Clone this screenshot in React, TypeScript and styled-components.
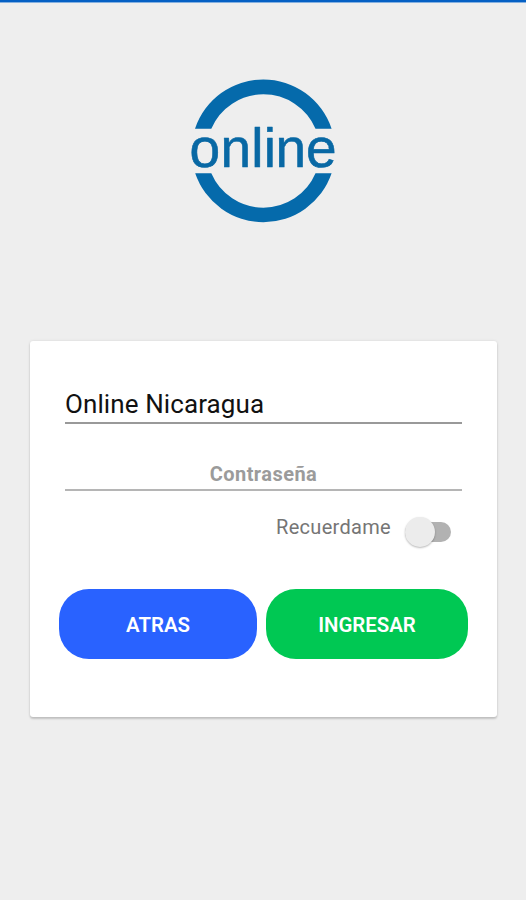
import React, { useState } from 'react';
import styled, { createGlobalStyle } from 'styled-components';

const GlobalStyle = createGlobalStyle`
  * { box-sizing: border-box; }
  body { margin: 0; background: #eeeeee; font-family: Roboto, sans-serif; }
`;

const Screen = styled.main`
  display: flex;
  flex-direction: column;
  height: 900px;
  width: 526px;
  background: #eeeeee;
  overflow: hidden;
`;

const StatusStrip = styled.div`
  height: 3px;
  flex: none;
  background: linear-gradient(#0560c4 0 2px, #84b0e0 2px 3px);
`;

const Logo = styled.svg`
  display: block;
  flex: none;
  width: 160px;
  height: 160px;
  margin: 67px 0 0 184px;
`;

const Wordmark = styled.text`
  font-family: 'Liberation Sans', sans-serif;
  font-size: 55px;
  fill: #0868a4;
  stroke: #0868a4;
  stroke-width: 0.6px;
  stroke-linejoin: round;
`;

const Card = styled.form`
  display: flex;
  flex-direction: column;
  flex: none;
  width: 467px;
  height: 376px;
  margin: 111px 0 0 30px;
  padding: 40px 29px 0;
  background: #ffffff;
  border-radius: 3px;
  box-shadow: 0 2px 2px rgba(0, 0, 0, 0.17), 0 0 3px rgba(0, 0, 0, 0.1);
`;

const Field = styled.input<{ $secret?: boolean }>`
  display: block;
  width: 397px;
  height: ${(p) => (p.$secret ? 42 : 43)}px;
  margin: ${(p) => (p.$secret ? 25 : 0)}px 0 0 6px;
  padding: ${(p) => (p.$secret ? '10px 0 0' : '4px 0 0')};
  border: 0;
  border-bottom: 2px solid ${(p) => (p.$secret ? '#b5b5b5' : '#999999')};
  border-radius: 0;
  outline: 0;
  background: transparent;
  color: #111111;
  font: ${(p) => (p.$secret ? '700 20px' : '400 26px')} Roboto, sans-serif;
  letter-spacing: ${(p) => (p.$secret ? 0.45 : 0.1)}px;
  text-align: ${(p) => (p.$secret ? 'center' : 'left')};
  &::placeholder { color: #9b9b9b; opacity: 1; }
`;

const RememberRow = styled.label`
  display: flex;
  align-items: center;
  justify-content: flex-end;
  gap: 14px;
  height: 32px;
  margin: 25px 17px 0 0;
`;

const RememberText = styled.span`
  color: #757575;
  font-size: 20px;
  line-height: 24px;
  letter-spacing: 0.3px;
  margin-top: -10px;
`;

const Track = styled.button<{ $on: boolean }>`
  display: flex;
  align-items: center;
  justify-content: ${(p) => (p.$on ? 'flex-end' : 'flex-start')};
  width: 46px;
  height: 20px;
  padding: 0;
  border: 0;
  border-radius: 10px;
  background: ${(p) => (p.$on ? '#9db8ff' : '#b2b2b2')};
`;

const Thumb = styled.span`
  flex: none;
  width: 30px;
  height: 30px;
  border-radius: 50%;
  background: #ececec;
  box-shadow: 0 1px 2px rgba(0, 0, 0, 0.28);
`;

const Actions = styled.div`
  display: flex;
  gap: 9px;
  margin-top: 41px;
`;

const ActionButton = styled.button<{ $tone: string; $width: number }>`
  width: ${(p) => p.$width}px;
  height: 70px;
  padding: 1px 0 0;
  border: 0;
  border-radius: 30px;
  background: ${(p) => p.$tone};
  color: #ffffff;
  font: 600 20.4px Roboto, sans-serif;
`;

export default function App() {
  const [remember, setRemember] = useState(false);
  return (
    <>
      <GlobalStyle />
      <Screen>
        <StatusStrip />
        <Logo viewBox="184 70 160 160" role="img" aria-label="online">
          <path
            d="M195 128.7A72 72 0 0 1 331.6 128.7H315.5A56.7 56.7 0 0 0 211.3 128.7ZM195.2 173.3H211.3A56.7 56.7 0 0 0 315.5 173.3H331.6A72 72 0 0 1 195.2 173.3Z"
            fill="#056aab"
          />
          <Wordmark x="189.6 220.4 251.2 263.8 275.6 306" y="166.6">online</Wordmark>
        </Logo>
        <Card onSubmit={(e) => e.preventDefault()}>
          <Field defaultValue="Online Nicaragua" aria-label="Usuario" />
          <Field $secret type="password" placeholder="Contraseña" />
          <RememberRow>
            <RememberText>Recuerdame</RememberText>
            <Track
              type="button"
              role="switch"
              aria-checked={remember}
              $on={remember}
              onClick={() => setRemember(!remember)}
            >
              <Thumb />
            </Track>
          </RememberRow>
          <Actions>
            <ActionButton type="button" $tone="#2962ff" $width={198}>ATRAS</ActionButton>
            <ActionButton type="submit" $tone="#00c853" $width={202}>INGRESAR</ActionButton>
          </Actions>
        </Card>
      </Screen>
    </>
  );
}
